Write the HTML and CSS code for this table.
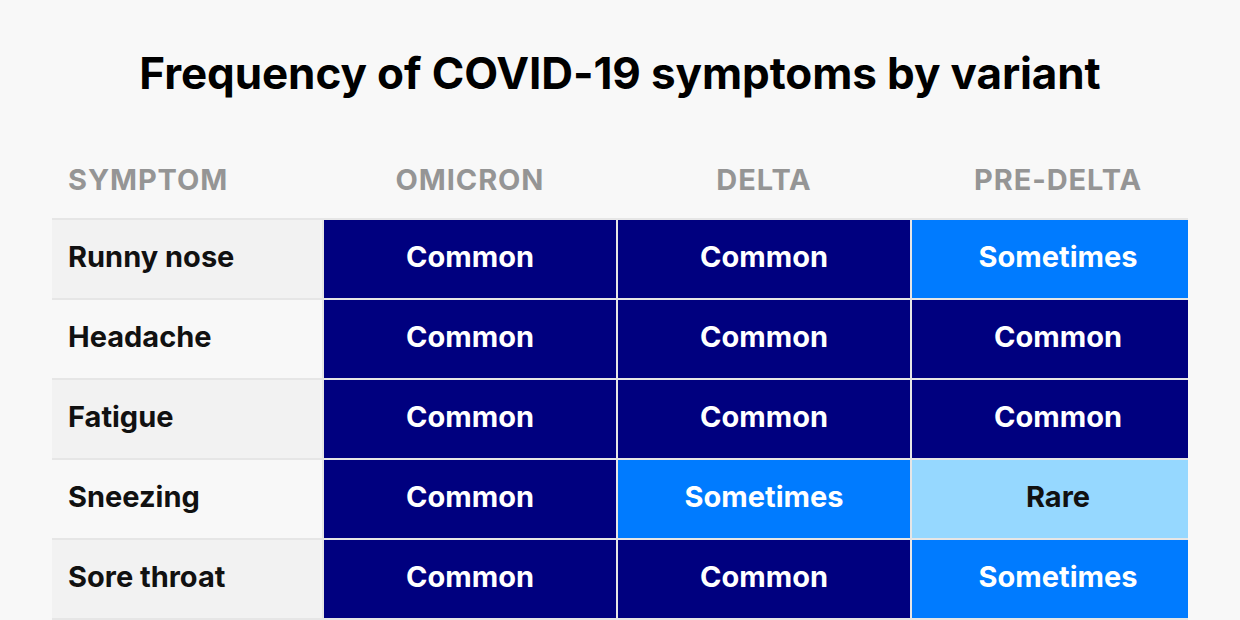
FILE: index.html
```html
<!DOCTYPE html>
<html lang="en">
<head>
<meta charset="utf-8">
<title>Frequency of COVID-19 symptoms by variant</title>
<link rel="stylesheet" href="styles.css">
</head>
<body>
<main class="page">
  <h1 class="title">Frequency of COVID-19 symptoms by variant</h1>
  <div class="table">
    <div class="head">
      <div class="hcell hsym">SYMPTOM</div>
      <div class="hcell">OMICRON</div>
      <div class="hcell">DELTA</div>
      <div class="hcell last">PRE-DELTA</div>
    </div>
    <div class="body">
      <div class="sym odd">Runny nose</div>
      <div class="cell common">Common</div>
      <div class="cell common">Common</div>
      <div class="cell sometimes last">Sometimes</div>

      <div class="sym even">Headache</div>
      <div class="cell common">Common</div>
      <div class="cell common">Common</div>
      <div class="cell common last">Common</div>

      <div class="sym odd">Fatigue</div>
      <div class="cell common">Common</div>
      <div class="cell common">Common</div>
      <div class="cell common last">Common</div>

      <div class="sym even">Sneezing</div>
      <div class="cell common">Common</div>
      <div class="cell sometimes">Sometimes</div>
      <div class="cell rare last">Rare</div>

      <div class="sym odd">Sore throat</div>
      <div class="cell common">Common</div>
      <div class="cell common">Common</div>
      <div class="cell sometimes last">Sometimes</div>
    </div>
  </div>
</main>
</body>
</html>
```
FILE: styles.css
```css
html, body {
  margin: 0;
  padding: 0;
  background: #f8f8f8;
}
body {
  font-family: Inter, "Liberation Sans", sans-serif;
  width: 1240px;
  height: 620px;
  overflow: hidden;
}
.page {
  padding-top: 43px;
}
.title {
  margin: 0;
  text-align: center;
  font-size: 44px;
  font-weight: 700;
  line-height: 60px;
  color: #000;
  letter-spacing: -0.1px;
}
.table {
  margin-left: 52px;
  width: 1136px;
  margin-top: 47px;
}
.head, .body {
  display: grid;
  grid-template-columns: 270px 292px 292px 276px;
  column-gap: 2px;
}
.head {
  height: 68px;
  align-items: center;
}
.hcell {
  text-align: center;
  font-size: 29px;
  font-weight: 700;
  color: #959595;
  letter-spacing: 0.9px;
  padding-bottom: 10px;
}
.hcell.hsym {
  text-align: left;
  padding-left: 16px;
}
.hcell.last, .cell.last {
  padding-left: 16px;
}
.body {
  background: #e6e6e6;
  row-gap: 2px;
  padding: 2px 0;
  grid-auto-rows: 78px;
}
.sym, .cell {
  display: flex;
  align-items: center;
  font-size: 29px;
  font-weight: 700;
  padding-bottom: 5px;
  box-sizing: border-box;
}
.sym {
  padding-left: 16px;
  color: #111;
}
.sym.odd { background: #f2f2f2; }
.sym.even { background: #f8f8f8; }
.cell {
  justify-content: center;
  color: #fff;
}
.common { background: #00007f; }
.sometimes { background: #007bff; }
.rare { background: #96d8ff; color: #111; }
```
